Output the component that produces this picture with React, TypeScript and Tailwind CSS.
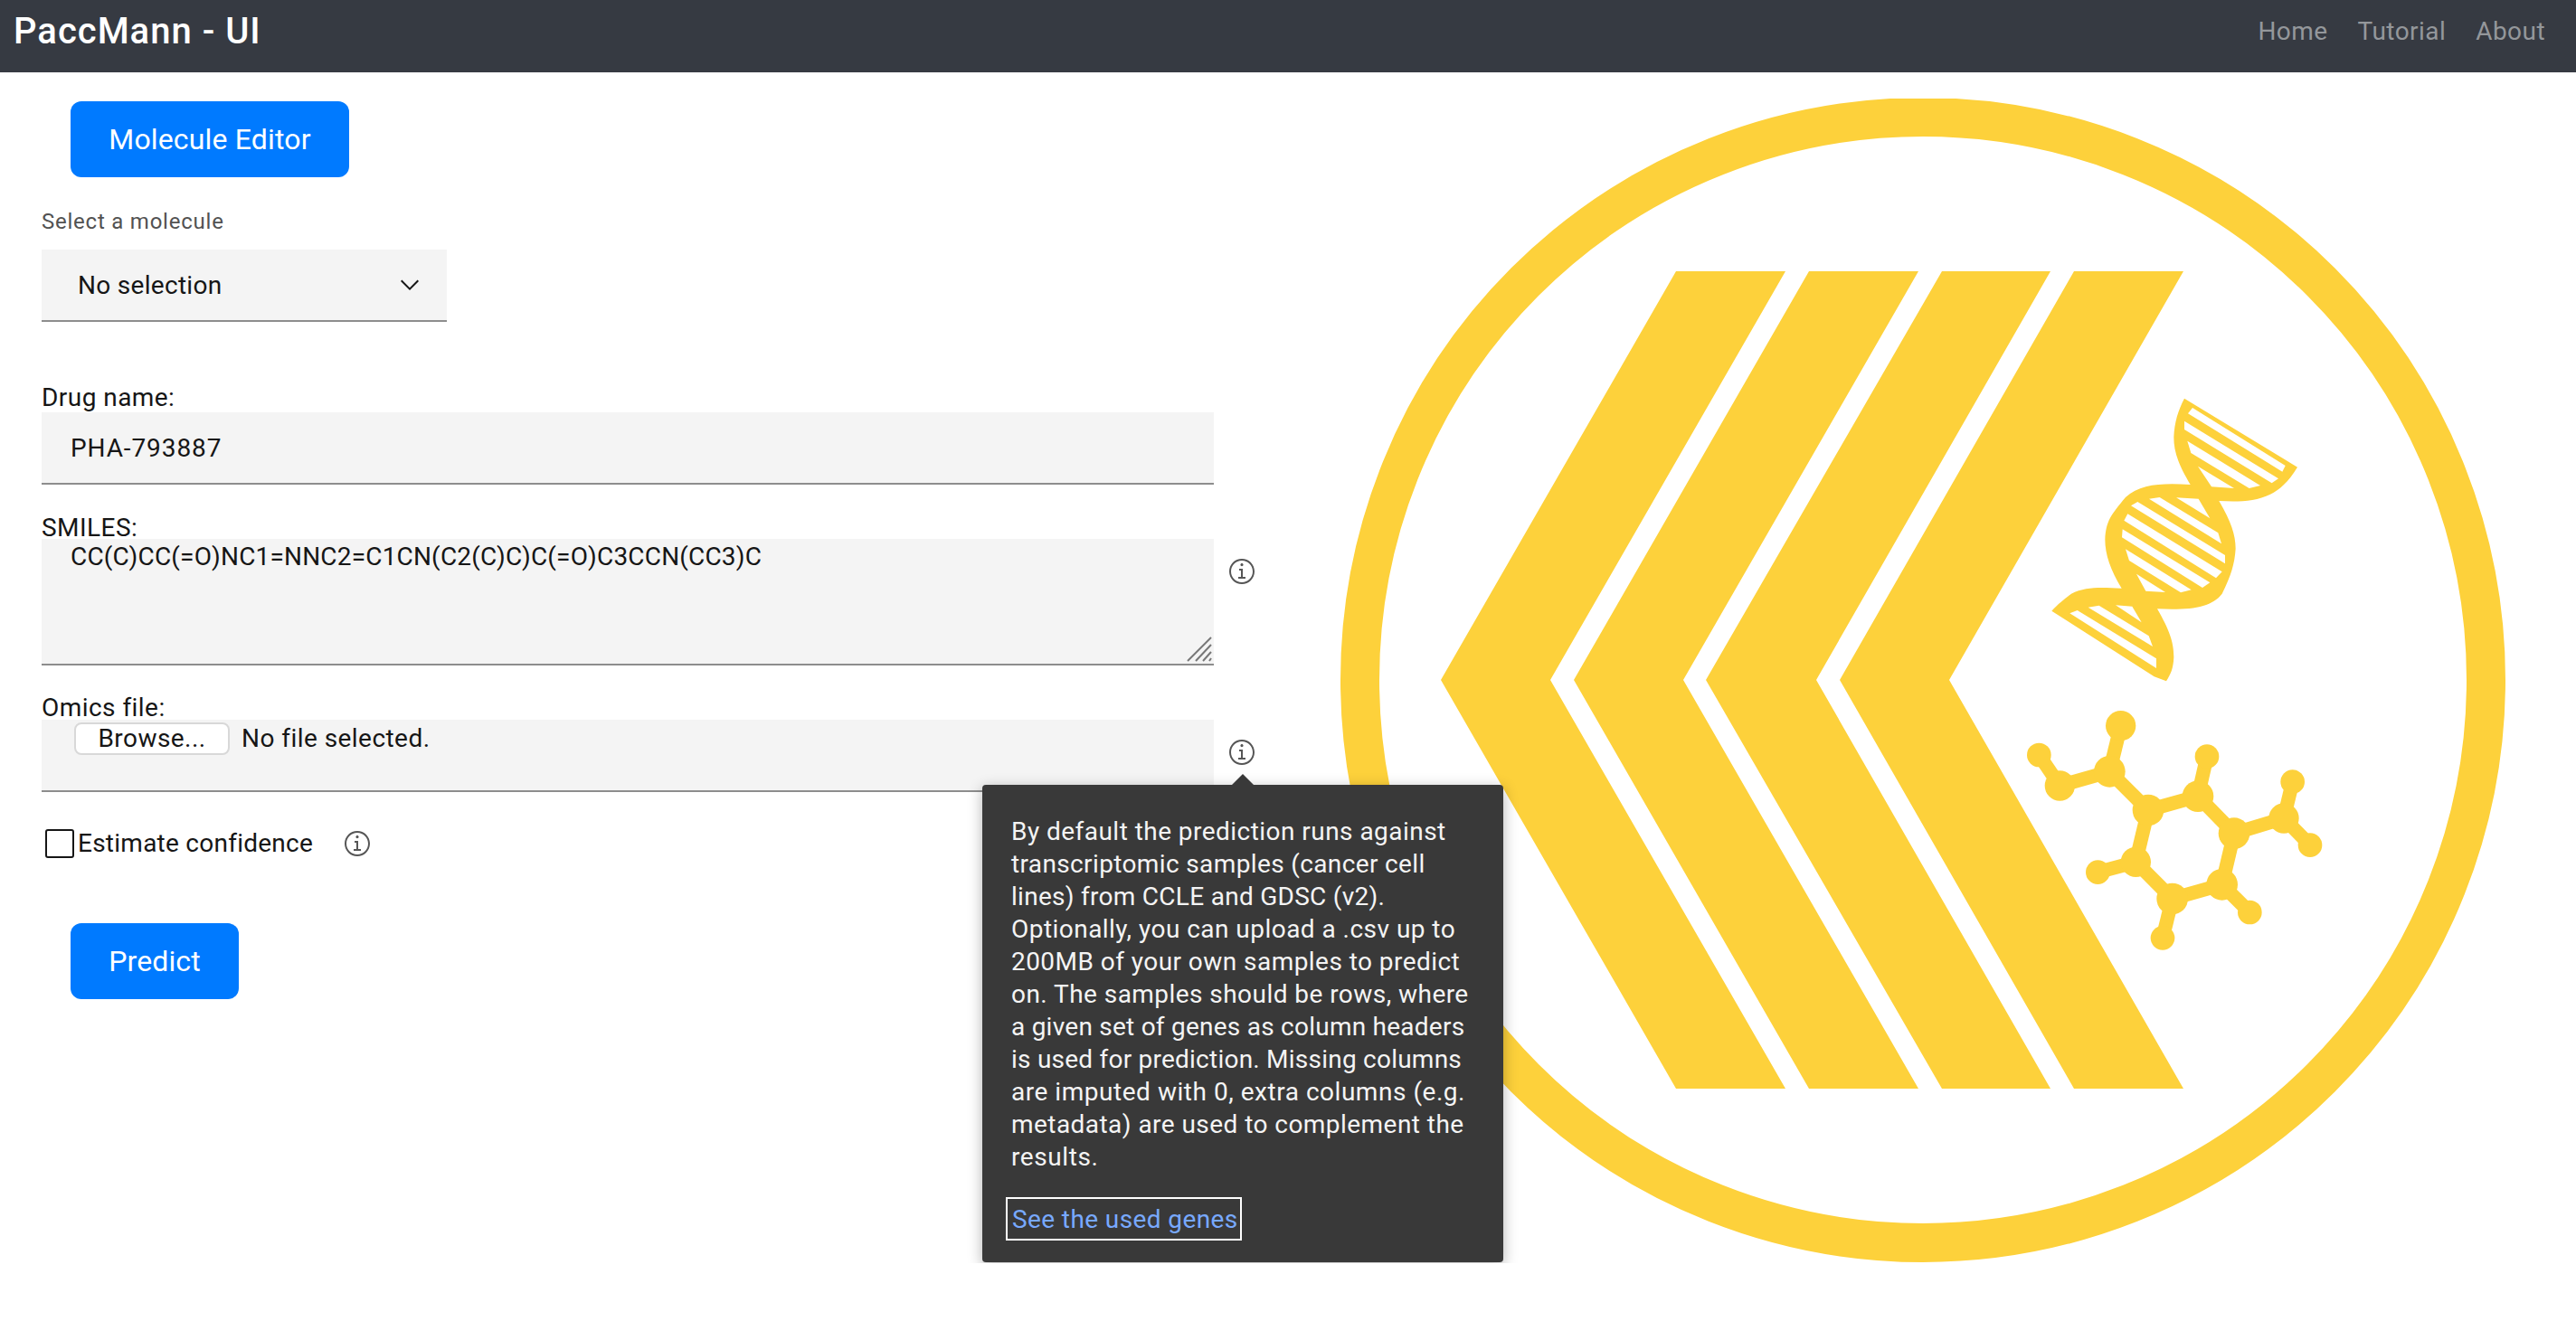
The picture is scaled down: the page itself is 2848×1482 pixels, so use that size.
import React from "react";

function InfoIcon({ className = "" }: { className?: string }) {
  return (
    <svg viewBox="0 0 16 16" className={`w-8 h-8 shrink-0 fill-[#565656] ${className}`}>
      <path d="M8.5 11V6.5h-2v1h1V11H6v1h4v-1zM8 3.5c-.4 0-.8.3-.8.8s.4.8.8.8.8-.3.8-.8-.4-.8-.8-.8z" />
      <path d="M8 15c-3.9 0-7-3.1-7-7s3.1-7 7-7 7 3.1 7 7-3.1 7-7 7zM8 2C4.7 2 2 4.7 2 8s2.7 6 6 6 6-2.7 6-6-2.7-6-6-6z" />
    </svg>
  );
}

const stripes = [
  "672,153 980,345 970,365 657,172",
  "645,197 957,388 935,403 645,225",
  "655,263 897,411 860,420 667,303",
  "690,347 810,420 735,415",
  "618,451 692,455 730,520",
  "528,455 563,450 757,568 768,604",
  "490,465 780,642 780,670 468,478",
  "457,505 770,697 750,718 445,527",
  "440,556 730,733 705,750 438,583",
  "450,622 668,757 633,766 462,660",
  "486,704 582,765 517,761",
  "417,808 472,812 503,865",
  "326,815 362,809 527,910 540,945",
  "265,835 290,825 552,985 552,1017",
];

const nodes: [number, number, number][] = [
  [397, 280, 52], [232, 327, 50], [434, 128, 50], [163, 225, 40], [525, 408, 52], [690, 362, 52],
  [810, 485, 52], [975, 435, 50], [720, 230, 40], [1004, 314, 40], [1062, 524, 40], [770, 655, 52],
  [605, 702, 52], [484, 580, 50], [358, 614, 40], [573, 832, 40], [862, 747, 40],
];
const bonds: [number, number][] = [
  [0, 2], [0, 1], [1, 3], [0, 4], [4, 5], [5, 6], [6, 11], [11, 12], [12, 13], [13, 4],
  [5, 8], [6, 7], [7, 9], [7, 10], [11, 16], [12, 15], [13, 14],
];

function Logo() {
  const y = "#fdd13b";
  return (
    <svg viewBox="1482 109 1288 1288" className="w-[1288px] h-[1288px] shrink-0 mt-[29px]">
      <circle cx="2126" cy="752" r="622.5" fill="none" stroke={y} strokeWidth="43" />
      <polygon fill={y} points="1853,300 1974,300 1714,752 1974,1204 1853,1204 1593,752" />
      <polygon fill={y} points="2000,300 2121,300 1861,752 2121,1204 2000,1204 1740,752" />
      <polygon fill={y} points="2147,300 2267,300 2008,752 2267,1204 2147,1204 1886,752" />
      <polygon fill={y} points="2293,300 2414,300 2155,752 2414,1204 2293,1204 2034,752" />
      <g transform="translate(2200 400) scale(0.33333)">
        <path
          fill={y}
          d="M645 122 L1020 350 C990 400 960 425 930 440 C880 465 820 465 760 462 C800 530 815 575 815 620 C812 670 800 710 770 770 C735 815 670 825 555 820 C595 890 610 930 610 980 C608 1020 600 1035 585 1060 L545 1045 L205 827 C230 800 250 785 270 770 C320 745 370 750 437 752 C400 690 382 640 382 590 C385 530 400 510 450 450 C500 405 570 403 665 408 C625 340 610 300 610 250 C612 200 625 160 645 122 Z"
        />
        {stripes.map((p) => (
          <polygon key={p} points={p} fill="#fff" />
        ))}
      </g>
      <g transform="translate(2200 760) scale(0.33333)" fill={y} stroke={y}>
        {bonds.map(([a, b]) => (
          <line
            key={`${a}-${b}`}
            x1={nodes[a][0]}
            y1={nodes[a][1]}
            x2={nodes[b][0]}
            y2={nodes[b][1]}
            strokeWidth="46"
          />
        ))}
        {nodes.map(([cx, cy, r]) => (
          <circle key={`${cx}-${cy}`} cx={cx} cy={cy} r={r} stroke="none" />
        ))}
      </g>
    </svg>
  );
}

const lines: [string, string][] = [
  ["By default the prediction runs against", "tracking-[0.46px]"],
  ["transcriptomic samples (cancer cell", "tracking-[0.37px]"],
  ["lines) from CCLE and GDSC (v2).", "tracking-[0.28px]"],
  ["Optionally, you can upload a .csv up to", "tracking-[0.46px]"],
  ["200MB of your own samples to predict", "tracking-[0.45px]"],
  ["on. The samples should be rows, where", "tracking-[0.45px]"],
  ["a given set of genes as column headers", "tracking-[0.24px]"],
  ["is used for prediction. Missing columns", "tracking-[0.23px]"],
  ["are imputed with 0, extra columns (e.g.", "tracking-[0.53px]"],
  ["metadata) are used to complement the", "tracking-[0.45px]"],
  ["results.", "tracking-[0.6px]"],
];

export default function App() {
  return (
    <div className="bg-white font-[Roboto,sans-serif] text-[28px] leading-[36px] text-[#161616] tracking-[0.45px]">
      <nav className="h-20 bg-[#363a42] flex items-start justify-between pl-[15px] pr-[34px]">
        <span className="text-[40px] leading-[70px] font-medium text-white tracking-[1px]">PaccMann - UI</span>
        <div className="flex gap-[33px] leading-[70px] text-[#94979b]">
          <a>Home</a>
          <a>Tutorial</a>
          <a>About</a>
        </div>
      </nav>
      <main className="flex items-start">
        <div className="w-[1482px] shrink-0 pl-[46px] pt-8 relative">
          <button className="block ml-8 h-[84px] w-[308px] rounded-xl bg-[#007aff] text-white text-[32px] tracking-[0.16px]">
            Molecule Editor
          </button>
          <div className="mt-[33px] text-[24px] leading-8 text-[#525252] tracking-[0.77px]">Select a molecule</div>
          <div className="mt-[15px] w-[448px] h-20 bg-[#f4f4f4] border-b-2 border-[#8d8d8d] flex items-center justify-between pl-10 pr-[25px]">
            <span className="tracking-[0.3px] pt-[2px]">No selection</span>
            <svg viewBox="0 0 16 16" className="w-8 h-8 fill-[#161616]">
              <path d="M8 11L3 6l.7-.7L8 9.6l4.3-4.3.7.7z" />
            </svg>
          </div>

          <div className="mt-[68px] h-8 leading-8">Drug name:</div>
          <input
            readOnly
            value="PHA-793887"
            className="block w-[1296px] h-20 bg-[#f4f4f4] border-b-2 border-[#8d8d8d] pl-8 outline-none tracking-[0.9px]"
          />

          <div className="mt-7 h-8 leading-10">SMILES:</div>
          <div className="flex items-start gap-[15px]">
            <div className="relative w-[1296px] h-[140px] shrink-0">
              <textarea
                readOnly
                value="CC(C)CC(=O)NC1=NNC2=C1CN(C2(C)C)C(=O)C3CCN(CC3)C"
                className="block w-full h-full bg-[#f4f4f4] border-b-2 border-[#8d8d8d] pl-8 pt-[2px] resize-none outline-none tracking-[0.18px]"
              />
              <svg viewBox="0 0 28 28" className="absolute right-[2px] bottom-[4px] w-7 h-7 stroke-[#777777]" strokeWidth="2">
                <line x1="1" y1="27" x2="27" y2="1" />
                <line x1="10" y1="27" x2="27" y2="9" />
                <line x1="18" y1="27" x2="27" y2="17" />
                <line x1="25" y1="27" x2="27" y2="24" />
              </svg>
            </div>
            <InfoIcon className="mt-[20px]" />
          </div>

          <div className="mt-7 h-8 leading-[38px]">Omics file:</div>
          <div className="flex items-start gap-[15px] relative">
            <div className="w-[1296px] h-20 shrink-0 bg-[#f4f4f4] border-b-2 border-[#8d8d8d] flex items-start pl-9 pt-[3px]">
              <button className="w-[172px] h-9 bg-white border-2 border-[#d8d8d8] rounded-lg leading-8">Browse...</button>
              <span className="ml-[13px]">No file selected.</span>
            </div>
            <InfoIcon className="mt-5" />
            <div className="absolute left-[1040px] top-[72px] w-[576px] h-[528px] bg-[#393939] rounded-[4px] text-[#f4f4f4] pl-8 pt-[34px] shadow-[0_4px_16px_rgba(0,0,0,0.3)] z-10">
              <div className="absolute left-[276px] -top-3 w-0 h-0 border-x-12 border-b-12 border-x-transparent border-b-[#393939]" />
              {lines.map(([l, t]) => (
                <div key={l} className={`whitespace-nowrap ${t}`}>{l}</div>
              ))}
              <a className="block mt-[26px] -ml-[6px] w-[261px] h-[48px] border-2 border-white pl-[5px] leading-[46px] text-[#78a9ff] whitespace-nowrap tracking-[0.4px]">
                See the used genes
              </a>
            </div>
          </div>

          <div className="mt-[41px] h-8 flex items-center pl-1">
            <span className="w-8 h-8 border-2 border-[#161616] rounded-[3px] bg-white" />
            <span className="ml-1 tracking-[0.25px]">Estimate confidence</span>
            <InfoIcon className="ml-[33px]" />
          </div>

          <button className="block ml-8 mt-[72px] h-[84px] w-[186px] rounded-xl bg-[#007aff] text-white text-[32px] tracking-[0.1px]">
            Predict
          </button>
        </div>
        <Logo />
      </main>
    </div>
  );
}
